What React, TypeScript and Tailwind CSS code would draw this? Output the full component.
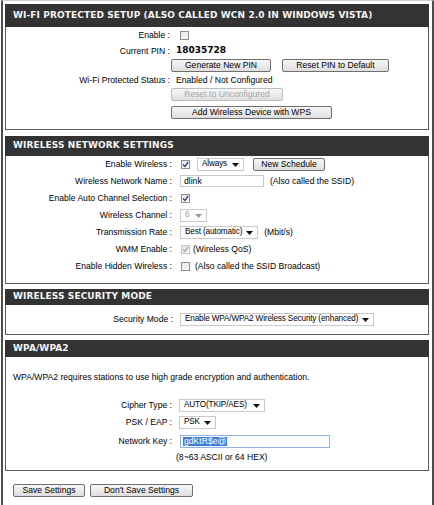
import React from "react";

const sans = "font-['Liberation_Sans',Arial,sans-serif]";

function Arrow({ gray }: { gray?: boolean }) {
  return (
    <svg width="7" height="4" viewBox="0 0 7 4" className="shrink-0">
      <path d="M0 0 H7 L3.5 4 Z" fill={gray ? "#9a9a9a" : "#111"} />
    </svg>
  );
}

function Check({ checked, disabled }: { checked?: boolean; disabled?: boolean }) {
  return (
    <span
      className={
        "flex h-[9px] w-[9px] shrink-0 items-center justify-center border bg-gradient-to-br from-[#e6e6e6] to-[#fbfbfb] " +
        (disabled ? "border-[#c4c4c4]" : "border-[#8f8f8f]")
      }
    >
      {checked && (
        <svg width="7" height="7" viewBox="0 0 7 7">
          <path
            d="M1 3.5 L3 5.5 L6.2 1"
            fill="none"
            stroke={disabled ? "#a8a8a8" : "#2a3f8f"}
            strokeWidth="1.3"
          />
        </svg>
      )}
    </span>
  );
}

function Btn({ children, w, disabled }: { children: React.ReactNode; w: string; disabled?: boolean }) {
  return (
    <div
      className={
        "flex h-[13px] items-center justify-center whitespace-nowrap rounded-[2px] border bg-gradient-to-b from-[#f7f7f7] to-[#dedede] text-[8.6px] leading-none " +
        w +
        (disabled ? " border-[#bdbdbd] text-[#a8a8a8]" : " border-[#6f6f6f] text-black")
      }
    >
      {children}
    </div>
  );
}

function Select({ children, w, gray }: { children: React.ReactNode; w: string; gray?: boolean }) {
  return (
    <div
      className={
        "flex h-[13px] items-center justify-between gap-[4px] border border-[#c9c9c9] bg-white pl-[4px] pr-[4px] text-[8.2px] leading-none tracking-[-0.15px] " +
        w +
        (gray ? " text-[#9a9a9a]" : " text-black")
      }
    >
      <span className="whitespace-nowrap">{children}</span>
      <Arrow gray={gray} />
    </div>
  );
}

function Row({
  label,
  lw,
  gap,
  children,
  h = "h-[17px]",
}: {
  label: string;
  lw: string;
  gap: string;
  children?: React.ReactNode;
  h?: string;
}) {
  return (
    <div className={"flex items-center " + h}>
      <div className={"shrink-0 whitespace-nowrap text-right " + lw}>{label} :</div>
      <div className={"flex items-center " + gap}>{children}</div>
    </div>
  );
}

function Section({
  title,
  hh,
  children,
  body,
}: {
  title: string;
  hh: string;
  children: React.ReactNode;
  body: string;
}) {
  return (
    <div className="ml-[2px] mr-[3px]">
      <div
        className={
          "flex items-center bg-[#333333] pl-[8px] font-['DejaVu_Sans',Verdana,sans-serif] text-[9px] font-bold tracking-[0.1px] text-[#f4f4f4] " +
          hh
        }
      >
        {title}
      </div>
      <div className={"border-x border-b border-[#5a5a5a] bg-white " + body}>{children}</div>
    </div>
  );
}

export default function App() {
  return (
    <div className={"min-h-[505px] bg-white pl-[1px] text-[8.6px] text-black " + sans}>
      <div className="min-h-[505px] w-[433px] border-x-2 border-t border-[#4d4d4d] border-t-[#cfcfcf] pt-[3px]">
        <Section
          title="WI-FI PROTECTED SETUP (ALSO CALLED WCN 2.0 IN WINDOWS VISTA)"
          hh="h-[23px]"
          body="pb-[10px]"
        >
          <Row label="Enable" lw="w-[164px]" gap="ml-[10px]" h="h-[16px]">
            <Check />
          </Row>
          <Row label="Current PIN" lw="w-[164px]" gap="ml-[6px]" h="h-[16px]">
            <span className="font-['DejaVu_Sans',Verdana,sans-serif] text-[9px] font-bold">18035728</span>
          </Row>
          <div className="ml-[165px] flex gap-[11px]">
            <Btn w="w-[100px]">Generate New PIN</Btn>
            <Btn w="w-[107px]">Reset PIN to Default</Btn>
          </div>
          <Row label="Wi-Fi Protected Status" lw="w-[164px]" gap="ml-[6px]" h="h-[16px]">
            <span>Enabled / Not Configured</span>
          </Row>
          <div className="ml-[165px] flex flex-col gap-[5px]">
            <Btn w="w-[112px]" disabled>
              Reset to Unconfigured
            </Btn>
            <Btn w="w-[161px]">Add Wireless Device with WPS</Btn>
          </div>
        </Section>

        <div className="h-[6px]" />

        <Section title="WIRELESS NETWORK SETTINGS" hh="h-[20px]" body="pb-[8px]">
          <Row label="Enable Wireless" lw="w-[166px]" gap="ml-[9px]">
            <Check checked />
            <div className="ml-[7px]">
              <Select w="min-w-[47px]">Always</Select>
            </div>
            <div className="ml-[9px]">
              <Btn w="w-[72px]">New Schedule</Btn>
            </div>
          </Row>
          <Row label="Wireless Network Name" lw="w-[166px]" gap="ml-[8px]">
            <div className="flex h-[12px] w-[84px] items-center border border-[#c9c9c9] pl-[3px] leading-none">dlink</div>
            <span className="ml-[6px]">(Also called the SSID)</span>
          </Row>
          <Row label="Enable Auto Channel Selection" lw="w-[166px]" gap="ml-[9px]">
            <Check checked />
          </Row>
          <Row label="Wireless Channel" lw="w-[166px]" gap="ml-[8px]">
            <Select w="min-w-[27px]" gray>
              6
            </Select>
          </Row>
          <Row label="Transmission Rate" lw="w-[166px]" gap="ml-[8px]">
            <Select w="min-w-[76px]">Best (automatic)</Select>
            <span className="ml-[6px]">(Mbit/s)</span>
          </Row>
          <Row label="WMM Enable" lw="w-[166px]" gap="ml-[9px]">
            <Check checked disabled />
            <span className="ml-[3px]">(Wireless QoS)</span>
          </Row>
          <Row label="Enable Hidden Wireless" lw="w-[166px]" gap="ml-[9px]">
            <Check />
            <span className="ml-[5px]">(Also called the SSID Broadcast)</span>
          </Row>
        </Section>

        <div className="h-[5px]" />

        <Section title="WIRELESS SECURITY MODE" hh="h-[16px]" body="flex h-[30px] items-center">
          <Row label="Security Mode" lw="w-[167px]" gap="ml-[7px]">
            <Select w="min-w-[191px]">Enable WPA/WPA2 Wireless Security (enhanced)</Select>
          </Row>
        </Section>

        <div className="h-[5px]" />

        <Section title="WPA/WPA2" hh="h-[17px]" body="pt-[14px] pb-[6px]">
          <div className="flex h-[12px] items-center pl-[7px]">
            WPA/WPA2 requires stations to use high grade encryption and authentication.
          </div>
          <div className="h-[14px]" />
          <Row label="Cipher Type" lw="w-[166px]" gap="ml-[7px]">
            <Select w="min-w-[86px]">AUTO(TKIP/AES)</Select>
          </Row>
          <Row label="PSK / EAP" lw="w-[166px]" gap="ml-[7px]">
            <Select w="min-w-[36px]">PSK</Select>
          </Row>
          <div className="mt-[2px]">
            <Row label="Network Key" lw="w-[166px]" gap="ml-[8px]">
              <div className="flex h-[13px] w-[150px] items-center border border-[#8fb3e6] pl-[2px] leading-none">
                <span className="bg-[#3d7fd6] px-[1px] text-white">gdKtR$e@</span>
              </div>
            </Row>
          </div>
          <div className="flex h-[14px] items-center pl-[170px]">(8~63 ASCII or 64 HEX)</div>
        </Section>

        <div className="ml-[10px] mt-[13px] flex gap-[5px]">
          <Btn w="w-[72px]">Save Settings</Btn>
          <Btn w="w-[103px]">Don't Save Settings</Btn>
        </div>
      </div>
    </div>
  );
}
